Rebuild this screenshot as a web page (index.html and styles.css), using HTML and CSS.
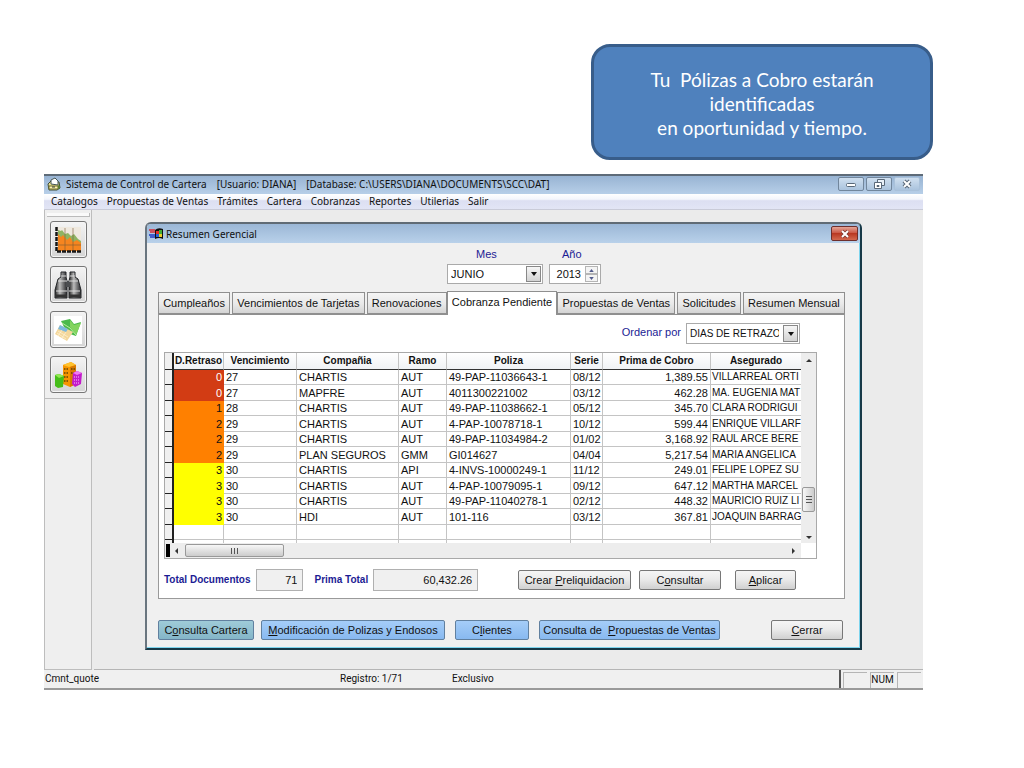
FILE: index.html
```html
<!DOCTYPE html>
<html lang="es">
<head>
<meta charset="utf-8">
<title>Sistema de Control de Cartera</title>
<link rel="stylesheet" href="styles.css">
</head>
<body>
<p class="callout">Tu&nbsp; Pólizas a Cobro estarán<br>identificadas<br>en oportunidad y tiempo.</p>

<main class="app">
  <header class="titlebar">
    <svg class="title-icon" viewBox="0 0 14 14" aria-hidden="true"><path d="M1 7l3-3 8 1 1 6-3 2H2z" fill="#e8df8e" stroke="#3d4a35"/><path d="M4 7V3l4-2 3 3v4z" fill="#fff" stroke="#455"/><path d="M2 9h9v3H2z" fill="#fff6ae" stroke="#6c6a2d"/><path d="M5 10h3" stroke="#333"/><path d="M11 8l2 1v2l-2 1z" fill="#587e35"/></svg>
    <h1 class="title-text"><span>Sistema de Control de Cartera</span><span>[Usuario: DIANA]</span><span>[Database: C:\USERS\DIANA\DOCUMENTS\SCC\DAT]</span></h1>
    <div class="window-controls">
      <button class="win-btn" aria-label="Minimizar"><svg viewBox="0 0 12 10"><rect x="1.500" y="4.500" width="9" height="3" rx="1" fill="#fff" stroke="#596878"/></svg></button>
      <button class="win-btn" aria-label="Restaurar"><svg viewBox="0 0 12 10"><path d="M4.500.500h7v6h-7z" fill="#e8f0f8" stroke="#596878"/><path d="M1.500 3.500h7v6h-7z" fill="#fff" stroke="#596878"/><path d="M4 6.500h2v1H4z" stroke="#596878" fill="none"/></svg></button>
      <button class="win-btn win-btn-soft" aria-label="Cerrar aplicación"><svg viewBox="0 0 12 10"><path d="M3 2l6 6m0-6L3 8" stroke="#596878" stroke-width="4"/><path d="M3 2l6 6m0-6L3 8" stroke="#fff" stroke-width="2"/></svg></button>
    </div>
  </header>

  <nav class="menubar">
    <button>Catalogos</button><button>Propuestas de Ventas</button><button>Trámites</button><button>Cartera</button><button>Cobranzas</button><button>Reportes</button><button>Utilerias</button><button>Salir</button>
  </nav>

  <div class="workspace">
    <aside class="sidebar">
      <div class="toolstrip">
        <button class="tool" aria-label="Gráfica"><svg viewBox="0 0 28 28"><path d="M2 1h25v25H2z" fill="#efe9df"/><path d="M4 4l3 1 1-1 3 4 3-1 3 3 3-2 4 5 3 2v10H4z" fill="#8fb463"/><path d="M4 8l3 3 2-2 4 5 3-3 3 5 4-2 4 3v8H4z" fill="#f6851f"/><path d="M4 19h23M11 2v23M19 2v23" stroke="#7a5a38" stroke-width=".6"/><path d="M2.500 1v24.500H27" fill="none" stroke="#161616" stroke-width="2.500" stroke-dasharray="4 1"/></svg></button>
        <button class="tool" aria-label="Buscar"><svg viewBox="0 0 28 28"><defs><linearGradient id="lens"><stop stop-color="#222"/><stop offset=".4" stop-color="#bbb"/><stop offset="1" stop-color="#252629"/></linearGradient></defs><path d="M7 1h5v5l1 4v17H1v-8L4 8l3-2z" fill="url(#lens)" stroke="#25272a"/><path d="M16 1h5v5l3 2 3 11v8H15V10l1-4z" fill="url(#lens)" stroke="#25272a"/><path d="M12 10h4v6h-4z" fill="#4b4d50"/><path d="M7 5h5m4 0h5M4 10h9m2 0h9M2 20h11m2 0h11" stroke="#ddd"/><path d="M1 25h12m2 0h12" stroke="#333" stroke-width="3"/></svg></button>
        <button class="tool tool-white" aria-label="Calcular"><svg viewBox="0 0 28 28"><path d="M7 5l9-2 4 5 7-2-5 14-9-3z" fill="#4ab94b"/><path d="M16 4l4 5 7-2-5 12-6-8z" fill="#83d45f"/><path d="M8 7l8 5 6 7" fill="none" stroke="#b8ed9d"/><path d="M6 9l13 7-6 9L1 18z" fill="#f4d79b"/><path d="M6 9l8 4-2 3-8-3z" fill="#7db9dc"/><path d="M4 15l10 6M3 17l9 6M8 14l-4 6M12 16l-4 6" stroke="#fff7df" stroke-width=".6"/></svg></button>
        <button class="tool" aria-label="Edificios"><svg viewBox="0 0 28 28"><path d="M9 4l8-3 5 3v19l-6 3-7-3z" fill="#f79500"/><path d="M9 4l8-3 5 3-7 2z" fill="#ffc22d"/><path d="M16 6l6-2v19l-6 3z" fill="#d97900"/><path d="M10 8h5M10 12h5M10 16h5M10 20h5M17 8h4M17 12h4" stroke="#664300" stroke-width="1.500" stroke-dasharray="1.500 1"/><path d="M1 14l4-1 5 2-1 11-5 1-3-2z" fill="#45bd19"/><path d="M1 14l4-1 5 2-5 2z" fill="#91e951"/><path d="M19 12l4-2 5 2-1 11-6 3-3-3z" fill="#c31bcb"/><path d="M19 12l4-2 5 2-5 2z" fill="#f17bf4"/><path d="M20 16h6M20 19h6M20 22h5" stroke="#fac4ff" stroke-dasharray="1 1"/></svg></button>
      </div>
    </aside>

    <div class="desktop">
      <section class="dialog" aria-labelledby="dlg-title">
        <header class="dialog-title">
          <svg class="dialog-icon" viewBox="0 0 14 12" aria-hidden="true"><path d="M6 2q3-3 8-1v10q-4-2-8 0z" fill="#111"/><path d="M7 3h3v3H7z" fill="#e72d25"/><path d="M10 2h3v4h-3z" fill="#42af37"/><path d="M7 6h3v3H7z" fill="#2463d4"/><path d="M10 6h3v3h-3z" fill="#eed029"/><path d="M0 2h6M1 4h5" stroke="#d82b36" stroke-width="1.500"/><path d="M0 7h6M1 9h5" stroke="#203ac4" stroke-width="1.500"/></svg>
          <h2 id="dlg-title">Resumen Gerencial</h2>
          <button class="close" aria-label="Cerrar ventana"><svg viewBox="0 0 12 10"><path d="M3 2l6 6m0-6L3 8" stroke="#7a372e" stroke-width="3.500"/><path d="M3 2l6 6m0-6L3 8" stroke="#fff" stroke-width="2"/></svg></button>
        </header>

        <div class="dialog-body">
          <div class="period">
            <div class="field"><label for="mes">Mes</label>
              <span class="combo combo-month"><select id="mes"><option>JUNIO</option></select><span class="arrow" aria-hidden="true"></span></span></div>
            <div class="field"><label for="anio">Año</label>
              <span class="spin"><input id="anio" type="text" value="2013"><span class="spin-buttons"><button aria-label="Aumentar"><svg viewBox="0 0 6 4"><path d="M3 0l3 4H0z" fill="#525c8c"/></svg></button><button aria-label="Disminuir"><svg viewBox="0 0 6 4"><path d="M0 0h6L3 4z" fill="#525c8c"/></svg></button></span></span></div>
          </div>

          <div class="tabs" role="tablist">
            <button role="tab">Cumpleaños</button><button role="tab">Vencimientos de Tarjetas</button><button role="tab">Renovaciones</button><button role="tab" class="active" aria-selected="true">Cobranza Pendiente</button><button role="tab">Propuestas de Ventas</button><button role="tab">Solicitudes</button><button role="tab">Resumen Mensual</button>
          </div>

          <div class="panel" role="tabpanel">
            <div class="order"><label for="orden">Ordenar por</label>
              <span class="combo combo-order"><select id="orden"><option>DIAS DE RETRAZO</option></select><span class="arrow" aria-hidden="true"></span></span></div>

            <div class="grid">
              <div class="grid-view">
                <table>
                  <colgroup><col class="c-mark"><col class="c-days"><col class="c-due"><col class="c-company"><col class="c-branch"><col class="c-policy"><col class="c-serie"><col class="c-premium"><col></colgroup>
                  <thead><tr><th></th><th>D.Retraso</th><th>Vencimiento</th><th>Compañia</th><th>Ramo</th><th>Poliza</th><th>Serie</th><th>Prima de Cobro</th><th>Asegurado</th></tr></thead>
                  <tbody>
                    <tr class="late"><td></td><td>0</td><td>27</td><td>CHARTIS</td><td>AUT</td><td>49-PAP-11036643-1</td><td>08/12</td><td>1,389.55</td><td>VILLARREAL ORTI</td></tr>
                    <tr class="late"><td></td><td>0</td><td>27</td><td>MAPFRE</td><td>AUT</td><td>4011300221002</td><td>03/12</td><td>462.28</td><td>MA. EUGENIA MAT</td></tr>
                    <tr class="soon"><td></td><td>1</td><td>28</td><td>CHARTIS</td><td>AUT</td><td>49-PAP-11038662-1</td><td>05/12</td><td>345.70</td><td>CLARA RODRIGUI</td></tr>
                    <tr class="soon"><td></td><td>2</td><td>29</td><td>CHARTIS</td><td>AUT</td><td>4-PAP-10078718-1</td><td>10/12</td><td>599.44</td><td>ENRIQUE VILLARF</td></tr>
                    <tr class="soon"><td></td><td>2</td><td>29</td><td>CHARTIS</td><td>AUT</td><td>49-PAP-11034984-2</td><td>01/02</td><td>3,168.92</td><td>RAUL ARCE BERE</td></tr>
                    <tr class="soon"><td></td><td>2</td><td>29</td><td>PLAN SEGUROS</td><td>GMM</td><td>GI014627</td><td>04/04</td><td>5,217.54</td><td>MARIA ANGELICA</td></tr>
                    <tr class="next"><td></td><td>3</td><td>30</td><td>CHARTIS</td><td>API</td><td>4-INVS-10000249-1</td><td>11/12</td><td>249.01</td><td>FELIPE LOPEZ SU</td></tr>
                    <tr class="next"><td></td><td>3</td><td>30</td><td>CHARTIS</td><td>AUT</td><td>4-PAP-10079095-1</td><td>09/12</td><td>647.12</td><td>MARTHA MARCEL</td></tr>
                    <tr class="next"><td></td><td>3</td><td>30</td><td>CHARTIS</td><td>AUT</td><td>49-PAP-11040278-1</td><td>02/12</td><td>448.32</td><td>MAURICIO RUIZ LI</td></tr>
                    <tr class="next"><td></td><td>3</td><td>30</td><td>HDI</td><td>AUT</td><td>101-116</td><td>03/12</td><td>367.81</td><td>JOAQUIN BARRAG</td></tr>
                    <tr><td></td><td></td><td></td><td></td><td></td><td></td><td></td><td></td><td></td></tr>
                    <tr class="partial"><td></td><td></td><td></td><td></td><td></td><td></td><td></td><td></td><td></td></tr>
                  </tbody>
                </table>
              </div>
              <div class="vscroll" aria-hidden="true"><i class="tri up"></i><span class="vthumb"></span><i class="tri down"></i></div>
              <div class="hscroll" aria-hidden="true"><i class="split"></i><i class="tri left"></i><span class="hthumb"></span><i class="tri right"></i></div>
            </div>

            <div class="totals">
              <label for="docs">Total Documentos</label><input id="docs" class="total-docs" type="text" value="71" readonly>
              <label for="prima">Prima Total</label><input id="prima" class="total-premium" type="text" value="60,432.26" readonly>
              <div class="actions"><button class="btn btn-wide">Crear <u>P</u>reliquidacion</button><button class="btn btn-mid">C<u>o</u>nsultar</button><button class="btn btn-small"><u>A</u>plicar</button></div>
            </div>
          </div>

          <footer class="dialog-footer">
            <button class="btn teal b-cartera">C<u>o</u>nsulta Cartera</button><button class="btn blue b-modify"><u>M</u>odificación de Polizas y Endosos</button><button class="btn blue b-clients">C<u>l</u>ientes</button><button class="btn blue b-proposals">Consulta de&nbsp; <u>P</u>ropuestas de Ventas</button><button class="btn b-close"><u>C</u>errar</button>
          </footer>
        </div>
      </section>
    </div>
  </div>

  <footer class="status">
    <span class="st-name">Cmnt_quote</span><span class="st-record">Registro: 1/71</span><span class="st-mode">Exclusivo</span>
    <span class="st-cells"><span class="cell"></span><span class="cell">NUM</span><span class="cell"></span></span>
  </footer>
</main>
</body>
</html>
```
FILE: styles.css
```css
* { box-sizing: border-box; }

body {
  margin: 0;
  padding: 44px 91px 24px 44px;
  display: flex;
  flex-direction: column;
  background: #fff;
  color: #111;
  font: 11px/14px "Liberation Sans", Arial, sans-serif;
}

button, input, select { font: inherit; color: inherit; margin: 0; padding: 0; border-radius: 0; }
button { white-space: nowrap; }
h1, h2, p { margin: 0; font-size: inherit; font-weight: normal; }
svg { display: block; }

.callout {
  align-self: flex-end;
  width: 342px;
  padding: 21px 20px 17px;
  border: 3px solid #385d8a;
  border-radius: 19px;
  background: #4f81bd;
  color: #fff;
  font: 19px/24px Lato, sans-serif;
  text-align: center;
}

.app { margin: 14px 10px 0 0; background: #f0f0f0; border-bottom: 2px solid #9a9a9a; }

.titlebar {
  display: flex;
  align-items: center;
  height: 20px;
  padding: 0 3px 2px;
  border-top: 2px solid #5e6b78;
  background: linear-gradient(#98b4d3, #b7cfe8);
  font: 10px/14px "Noto Sans", sans-serif;
}
.title-icon { width: 14px; height: 14px; margin-right: 5px; }
.title-text { flex: 1; display: flex; gap: 10px; white-space: nowrap; }
.window-controls { display: flex; gap: 2px; }
.win-btn {
  display: grid;
  place-items: center;
  width: 26px;
  height: 14px;
  border: 1px solid #71869c;
  border-radius: 2px;
  background: linear-gradient(#cfdfef, #aac3dd);
}
.win-btn svg { width: 12px; height: 10px; }
.win-btn-soft { border-color: #a9c1da; }

.menubar {
  display: flex;
  gap: 9px;
  height: 16px;
  padding: 0 7px;
  background: linear-gradient(#fff 0, #f4f6fc 35%, #dcdff2 45%, #e2e5f5);
  border-bottom: 1px solid #c9cbd8;
  font: 10px/15px "Noto Sans", sans-serif;
}
.menubar button { border: 0; background: none; }

.workspace { display: flex; background: #ebebeb; }
.sidebar { flex: none; width: 48px; background: #efefef; border: solid #bdbdbd; border-width: 0 1px 1px; }
.toolstrip {
  display: flex;
  flex-direction: column;
  align-items: center;
  gap: 8px;
  padding-bottom: 5px;
  border-bottom: 1px solid #bdbdbd;
}
.toolstrip::before { content: ""; width: 42px; height: 3px; margin-top: 3px; margin-bottom: -4px; border: solid #bbb; border-width: 0 1px 1px 0; background: #fafafa; }
.tool {
  display: grid;
  place-items: center;
  width: 37px;
  height: 37px;
  border: 1px solid #777;
  border-radius: 3px;
  background: linear-gradient(#f4f4f4, #d5d5d5);
  box-shadow: inset 0 0 0 1px #f5f5f5;
}
.tool svg { width: 28px; height: 28px; }
.tool-white svg { background: #fff; }

.desktop { flex: 1; min-width: 0; margin-left: 2px; padding: 12px 61px 19px 51px; border-bottom: 1px solid #b5b5b5; }
.dialog {
  border: 2px solid #173947;
  border-top-color: #606b75;
  border-left-color: #69757f;
  border-radius: 6px 6px 0 0;
  background: #f0f0f0;
  box-shadow: inset -1px -1px #7fd5ee;
}
.dialog-title {
  display: flex;
  align-items: center;
  height: 19px;
  padding: 0 2px;
  border-radius: 4px 4px 0 0;
  background: linear-gradient(#9bb7d6, #b9d1ea);
  font: 10px/14px "Noto Sans", sans-serif;
}
.dialog-icon { width: 14px; height: 12px; margin-right: 3px; }
.dialog-title h2 { flex: 1; }
.close {
  display: grid;
  place-items: center;
  width: 27px;
  height: 15px;
  border: 1px solid #6d2f2d;
  border-radius: 2px;
  background: linear-gradient(#e4a597, #c8503d 50%, #b93822 50%, #d3694f);
}
.close svg { width: 12px; height: 10px; }

.dialog-body { padding: 4px 15px 8px 11px; }
.period { display: flex; justify-content: center; gap: 6px; padding-left: 45px; }
.field { display: flex; flex-direction: column; gap: 3px; }
.field label { color: #1c1c94; padding: 0 29px; }
.field + .field label { padding: 0 13px; }
.combo, .spin { display: flex; border: 1px solid #aaa; background: #fff; height: 20px; }
.combo select { flex: 1; min-width: 0; appearance: none; border: 0; background: none; padding: 0 3px; }
.combo-month { width: 96px; }
.combo-order { width: 114px; height: 21px; }
.combo-order select { font-size: 10px; }
.arrow { flex: none; width: 15px; margin: 1px; border: 1px solid #888; background: linear-gradient(#f6f6f6, #d2d2d2); display: grid; place-items: center; pointer-events: none; }
.arrow::before { content: ""; border: solid transparent; border-width: 4px 3px 0; border-top-color: #111; }
.spin { width: 52px; }
.spin input { width: 34px; border: 0; background: none; text-align: right; padding-right: 3px; }
.spin-buttons { display: flex; flex-direction: column; width: 13px; margin: 1px 0 1px 1px; }
.spin-buttons button { flex: 1; display: grid; place-items: center; border: 1px solid #b5b5b5; background: #f4f4f4; }
.spin-buttons svg { width: 5px; height: 3px; }

.tabs { display: flex; align-items: flex-end; gap: 2px; margin-top: 7px; }
.tabs button {
  flex: 1 0 auto;
  height: 22px;
  padding: 0 4px;
  border: 1px solid #8f8f8f;
  background: linear-gradient(#f5f5f5, #e9e9e9 55%, #d4d4d4);
}
.tabs .active { height: 24px; padding-bottom: 4px; margin: 0 -2px -1px; background: #fff; border-bottom: 0; z-index: 1; }

.panel { border: 1px solid #9a9a9a; background: #fff; padding: 8px 27px 7px 5px; border-top-color: #8f8f8f; }
.order { display: flex; justify-content: flex-end; gap: 5px; margin-right: 17px; }
.order label { color: #1c1c94; line-height: 19px; }

.grid {
  display: grid;
  grid-template-columns: 1fr 15px;
  margin-top: 8px;
  border: 1px solid #a9a9a9;
}
.grid-view { overflow: hidden; min-width: 0; }
table { width: 100%; border-collapse: separate; border-spacing: 0; table-layout: fixed; line-height: 14px; }
.c-mark { width: 9px; }
.c-days { width: 50px; }
.c-due { width: 73px; }
.c-company { width: 102px; }
.c-branch { width: 48px; }
.c-policy { width: 124px; }
.c-serie { width: 32px; }
.c-premium { width: 108px; }
th, td { padding: 0 2px; border: solid #c4c4c4; border-width: 0 1px 1px 0; white-space: nowrap; overflow: hidden; text-align: left; }
th { height: 17px; padding: 0; font-size: 10px; text-align: center; border-bottom-color: #333; background: linear-gradient(#fff, #f0f2f5); }
td { height: 15px; }
tr:nth-child(even) td { height: 16px; }
th:first-child, td:first-child { border-right: 2px solid #222; border-bottom-color: #222; background: #f0f0f0; padding: 0; }
th:last-child, td:last-child { border-right: 0; }
td:nth-child(2), td:nth-child(8) { text-align: right; }
td:nth-child(2) { padding-right: 1px; }
td:last-child { padding-left: 1px; padding-right: 0; font-size: 10px; }
.late td:nth-child(2) { background: #d23c14; border-color: #d23c14; color: #fff; }
.soon td:nth-child(2) { background: #ff8000; border-color: #ff8000; }
.next td:nth-child(2) { background: #ff0; border-color: #ff0; }
tbody .partial td { height: 3px; border-bottom: 0; }

.vscroll, .hscroll { display: flex; align-items: center; background: #ededed; }
.vscroll { flex-direction: column; padding: 6px 0 4px; }
.hscroll { height: 15px; }
.tri { border: 3px solid transparent; }
.up { border-width: 0 3px 3px; border-bottom-color: #333; }
.down { border-width: 3px 3px 0; border-top-color: #333; margin-top: auto; }
.left { border-width: 3px 3px 3px 0; border-right-color: #333; margin: 0 7px 0 5px; }
.right { border-width: 3px 0 3px 3px; border-left-color: #333; margin: 0 6px 0 auto; }
.vthumb, .hthumb { display: grid; place-items: center; border: 1px solid #999; border-radius: 2px; }
.vthumb { width: 13px; height: 25px; margin-top: 125px; background: linear-gradient(90deg, #f7f7f7, #ccc); }
.hthumb { width: 99px; height: 13px; background: linear-gradient(#f7f7f7, #ccc); }
.vthumb::before { content: ""; width: 6px; height: 7px; background: repeating-linear-gradient(#555 0 1px, transparent 1px 3px); }
.hthumb::before { content: ""; width: 7px; height: 6px; background: repeating-linear-gradient(90deg, #555 0 1px, transparent 1px 3px); }
.split { align-self: stretch; width: 4px; margin: 1px 0 1px 1px; background: #000; }

.totals { display: flex; align-items: center; margin-top: 10px; }
.totals label { color: #1c1c94; font-size: 10px; font-weight: bold; white-space: nowrap; }
.totals input { height: 22px; border: 1px solid #b0b0b0; background: #f0f0f0; text-align: right; padding: 0 5px; }
.total-docs { width: 47px; margin: 0 11px 0 6px; }
.total-premium { width: 105px; margin-left: 5px; }
.actions { display: flex; margin-left: auto; margin-right: 21px; }
.btn {
  height: 20px;
  border: 1px solid #777;
  border-radius: 2px;
  background: linear-gradient(#f5f5f5, #ebebeb 45%, #d0d0d0);
}
.btn-wide { width: 113px; }
.btn-mid { width: 82px; margin: 0 14px 0 8px; }
.btn-small { width: 61px; }
.dialog-footer { display: flex; margin-top: 21px; }
.blue { background: linear-gradient(#a5cdf8, #88b9f0); border-color: #61809f; }
.teal { background: linear-gradient(#9fcbd8, #84b5c8); border-color: #61809f; }
.b-cartera { width: 96px; margin-right: 7px; }
.b-modify { width: 184px; margin-right: 10px; }
.b-clients { width: 74px; margin-right: 10px; }
.b-proposals { width: 181px; }
.b-close { width: 72px; margin: 0 2px 0 auto; }

.status { display: flex; align-items: center; height: 18px; padding-left: 1px; font: 10px/14px Roboto, sans-serif; }
.st-name { width: 295px; }
.st-record { width: 112px; }
.st-cells { display: flex; gap: 3px; align-self: stretch; margin-left: auto; padding: 2px 2px 0; border-left: 2px solid #555; }
.cell { width: 24px; border: solid #b5b5b5; border-width: 1px 0 0 1px; text-align: center; }
```
